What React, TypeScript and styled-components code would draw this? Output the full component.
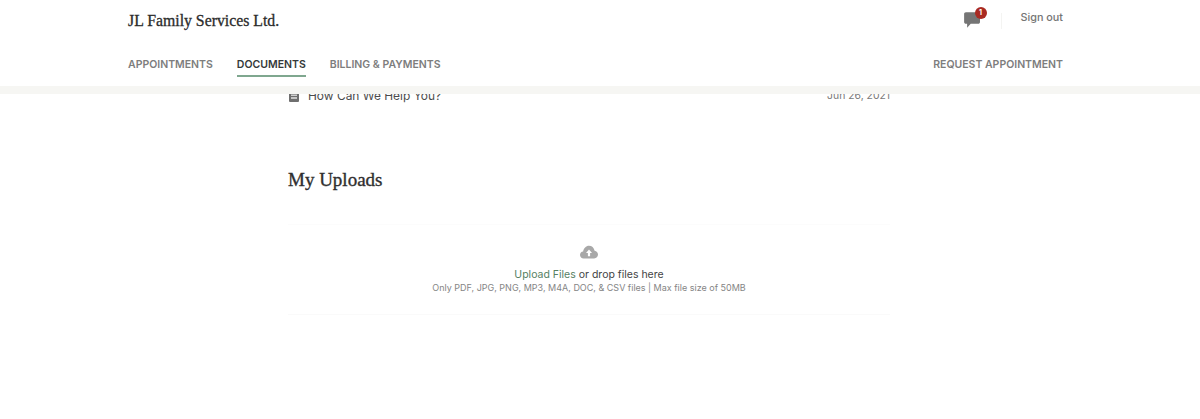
import React from "react";
import styled, { createGlobalStyle } from "styled-components";

const GlobalStyle = createGlobalStyle`
  html, body {
    margin: 0;
    padding: 0;
    background: #fff;
    font-family: Inter, "Liberation Sans", sans-serif;
    overflow: hidden;
  }
`;

const navItems = ["APPOINTMENTS", "DOCUMENTS", "BILLING & PAYMENTS"];

const CommentIcon = () => (
  <svg width="16" height="16" viewBox="3 2.6 13.3 13" fill="#757575">
    <path d="M4.6 2.6h10.2c.9 0 1.5.6 1.5 1.5v6.6c0 .9-.6 1.5-1.5 1.5H8.6l-3 3.4v-3.4h-1c-.9 0-1.5-.6-1.5-1.5V4.1c0-.9.6-1.5 1.5-1.5z" />
  </svg>
);

const ArticleIcon = () => (
  <svg width="12" height="12" viewBox="0 0 12 12">
    <rect x="1" y="1" width="10" height="10" rx="1" fill="#6f6f6f" />
    <rect x="3" y="3.6" width="6" height="1.2" fill="#e8e8e8" />
    <rect x="3" y="6.4" width="6" height="1.2" fill="#fff" />
  </svg>
);

const CloudIcon = () => (
  <svg width="20" height="14" viewBox="0 0 20 14">
    <path
      d="M4.6 13.4C2.6 13.4 1 12 1 10c0-1.8 1.3-3.2 3.1-3.4C4.7 3.2 7 .8 10 .8c2.8 0 5 2 5.6 4.9 1.9.2 3.4 1.9 3.4 3.9 0 2.1-1.7 3.8-3.8 3.8z"
      fill="#a8a8a8"
    />
    <path d="M10 4.6l3 3.4h-1.9v3.2H8.9V8H7z" fill="#fff" />
  </svg>
);

const Header = () => (
  <HeaderBar>
    <TopRow>
      <Brand>JL Family Services Ltd.</Brand>
      <Account>
        <MessageButton>
          <CommentIcon />
          <Badge>1</Badge>
        </MessageButton>
        <Divider />
        <SignOut>Sign out</SignOut>
      </Account>
    </TopRow>
    <NavRow>
      <NavList>
        {navItems.map((item) => (
          <NavLink key={item} $active={item === "DOCUMENTS"}>
            {item}
          </NavLink>
        ))}
      </NavList>
      <RequestLink>REQUEST APPOINTMENT</RequestLink>
    </NavRow>
    <HeaderEdge />
  </HeaderBar>
);

export default function App() {
  return (
    <Page>
      <GlobalStyle />
      <Header />
      <Main>
        <DocumentRow>
          <DocumentName>
            <ArticleIcon />
            How Can We Help You?
          </DocumentName>
          <DocumentDate>Jun 26, 2021</DocumentDate>
        </DocumentRow>
        <SectionTitle>My Uploads</SectionTitle>
        <DropZone>
          <CloudIcon />
          <DropText>
            <UploadLink>Upload Files</UploadLink> or drop files here
          </DropText>
          <DropHint>Only PDF, JPG, PNG, MP3, M4A, DOC, &amp; CSV files | Max file size of 50MB</DropHint>
        </DropZone>
      </Main>
    </Page>
  );
}

const Page = styled.div`
  width: 1200px;
  height: 419px;
  overflow: hidden;
  background: #fff;
`;

const HeaderBar = styled.header`
  position: relative;
  z-index: 10;
  background: #fff;
`;

const TopRow = styled.div`
  height: 42px;
  padding: 0 137px 0 128px;
  display: flex;
  align-items: center;
  justify-content: space-between;
`;

const Brand = styled.div`
  font-family: "Liberation Serif", serif;
  font-size: 15.8px;
  font-weight: 400;
  color: #2b2b2b;
  -webkit-text-stroke: 0.3px #2b2b2b;
`;

const Account = styled.div`
  display: flex;
  align-items: center;
`;

const MessageButton = styled.div`
  position: relative;
  width: 16px;
  height: 16px;
  margin-top: -2px;
`;

const Badge = styled.span`
  position: absolute;
  top: -5px;
  right: -7px;
  width: 12px;
  height: 12px;
  border-radius: 50%;
  background: #a92a22;
  color: #fff;
  font-size: 7px;
  font-weight: 700;
  line-height: 12px;
  text-align: center;
`;

const Divider = styled.div`
  width: 1px;
  height: 16px;
  margin: 0 19px 0 21px;
  background: #f4f4f2;
`;

const SignOut = styled.span`
  font-size: 10.8px;
  font-weight: 500;
  color: #757575;
  margin-top: -8px;
`;

const NavRow = styled.nav`
  height: 44px;
  padding: 0 137px 0 128px;
  display: flex;
  align-items: flex-start;
  justify-content: space-between;
`;

const NavList = styled.div`
  display: flex;
  gap: 24px;
`;

const NavLink = styled.a<{ $active?: boolean }>`
  height: 17px;
  padding-top: 16px;
  font-size: 10.5px;
  font-weight: 600;
  line-height: 13px;
  color: ${(p) => (p.$active ? "#35393a" : "#7d7d7d")};
  border-bottom: 2px solid ${(p) => (p.$active ? "#7fa78f" : "transparent")};
`;

const RequestLink = styled.a`
  padding-top: 16px;
  font-size: 10.5px;
  font-weight: 600;
  line-height: 13px;
  color: #7d7d7d;
`;

const HeaderEdge = styled.div`
  height: 8px;
  background: #f6f6f3;
`;

const Main = styled.main`
  width: 602px;
  margin: -8px 0 0 288px;
`;

const DocumentRow = styled.div`
  height: 18px;
  display: flex;
  align-items: center;
  justify-content: space-between;
`;

const DocumentName = styled.div`
  display: flex;
  align-items: center;
  gap: 8px;
  font-size: 11.95px;
  color: #4c4c4c;

  svg {
    margin-top: 3px;
  }
`;

const DocumentDate = styled.div`
  font-size: 10.4px;
  color: #7a7a7a;
`;

const SectionTitle = styled.h2`
  margin: 64px 0 0;
  font-family: "Liberation Serif", serif;
  font-size: 19px;
  line-height: 24px;
  font-weight: 400;
  color: #2f2f2f;
  -webkit-text-stroke: 0.35px #2f2f2f;
`;

const DropZone = styled.div`
  margin-top: 32px;
  height: 91px;
  padding-top: 20px;
  box-sizing: border-box;
  display: flex;
  flex-direction: column;
  align-items: center;
  border-top: 1px solid #fcfcfc;
  border-bottom: 1px solid #fafafa;
`;

const DropText = styled.div`
  margin-top: 9px;
  font-size: 10.5px;
  line-height: 14px;
  color: #444;
`;

const UploadLink = styled.span`
  color: #557f63;
`;

const DropHint = styled.div`
  font-size: 9px;
  line-height: 12px;
  color: #858585;
`;
